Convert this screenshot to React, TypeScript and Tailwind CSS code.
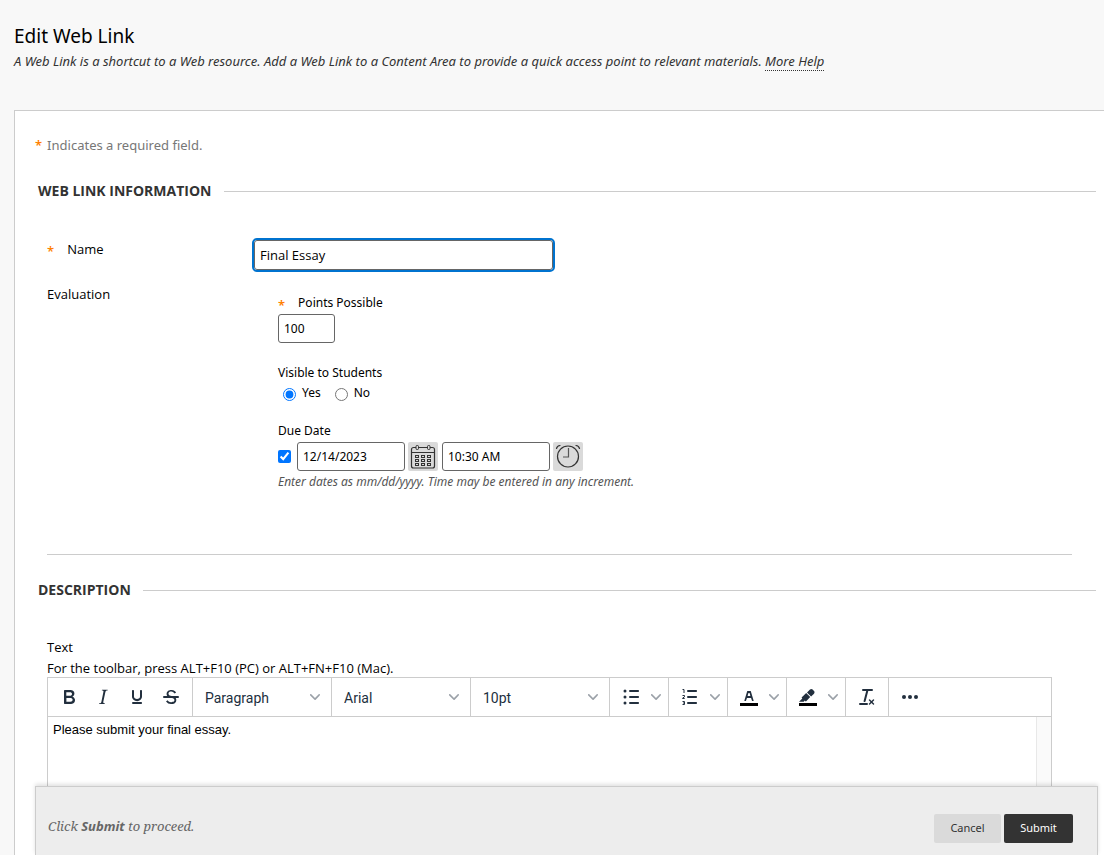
import React, { useState } from 'react';

const FONT_SIZES = ['8pt', '10pt', '12pt', '14pt', '18pt', '24pt'];

/** Orange marker in front of required fields. */
const Required: React.FC = () => <span className="text-[13px] leading-5 font-semibold text-[#ff8000]">*</span>;

const SectionTitle: React.FC<{ children: React.ReactNode }> = ({ children }) => (
    <div className="flex items-center gap-3 pl-[23px] pr-2">
        <h2 className="text-[14px] leading-5 font-bold text-[#333]">{children}</h2>
        <div className="h-px flex-1 bg-[#ccc]" />
    </div>
);

const Chevron: React.FC<{ className?: string }> = ({ className = '' }) => (
    <svg width="10" height="10" viewBox="0 0 10 10" fill="#222f3e" fillOpacity="0.45" className={className}>
        <path d="M8.7 2.2c.3-.3.8-.3 1 0 .4.4.4.9 0 1.2L5.7 7.8c-.3.3-.9.3-1.2 0L.2 3.4a.8.8 0 010-1.2c.3-.3.8-.3 1.1 0L5 6l3.7-3.8z" />
    </svg>
);

const Icon: React.FC<{ children: React.ReactNode }> = ({ children }) => (
    <svg width="24" height="24" viewBox="0 0 24 24" fill="#222f3e">{children}</svg>
);

const ToolButton: React.FC<{ label: string; children: React.ReactNode }> = ({ label, children }) => (
    <button type="button" aria-label={label} className="flex h-[34px] w-[34px] items-center justify-center">
        <Icon>{children}</Icon>
    </button>
);

const MenuArrow: React.FC<{ label: string }> = ({ label }) => (
    <button type="button" aria-label={label} className="flex h-[34px] w-4 items-center justify-center">
        <Chevron />
    </button>
);

const ToolGroup: React.FC<{ children: React.ReactNode; last?: boolean }> = ({ children, last }) => (
    <div className={`flex items-center px-1 ${last ? '' : 'border-r border-[#ccc]'}`}>{children}</div>
);

const ToolSelect: React.FC<{ label: string; initial: string; options: string[] }> = ({ label, initial, options }) => (
    <div className="relative flex w-[139px] items-center border-r border-[#ccc]">
        <select
            aria-label={label}
            defaultValue={initial}
            className="h-[34px] w-full appearance-none bg-transparent pt-[2px] pl-3 pr-6 font-[Roboto,sans-serif] text-sm text-[#222f3e]"
        >
            {options.map(o => <option key={o}>{o}</option>)}
        </select>
        <Chevron className="pointer-events-none absolute right-[11px]" />
    </div>
);

const CalendarIcon: React.FC = () => (
    <svg width="30" height="29" viewBox="0 0 30 29" fill="none" stroke="#333">
        <path d="M8 5.5H5.5a2 2 0 0 0-2 2V24a2 2 0 0 0 2 2h19a2 2 0 0 0 2-2V7.500a2 2 0 0 0-2-2H22M11 5.500h8M3.500 10.500h23" strokeWidth="1.200" />
        <rect x="8" y="3.500" width="2.500" height="4" rx="1" />
        <rect x="19.500" y="3.500" width="2.500" height="4" rx="1" />
        {[13.5, 17.5, 21.5].map(y => [7.5, 13.5, 19.5].map(x => (
            <rect key={`${x}-${y}`} x={x} y={y} width="3" height="2" />
        )))}
    </svg>
);

const ClockIcon: React.FC = () => (
    <svg width="30" height="29" viewBox="0 0 30 29" fill="none" stroke="#333" strokeWidth="1.2" strokeLinecap="round">
        <circle cx="15" cy="14.5" r="10.5" />
        <path d="M15.500 6v9H10" stroke="#555" strokeLinecap="butt" />
        <path d="M3.500 6.500C4 4.500 5 3.700 7 3.500M26.500 6.500C26 4.500 25 3.700 23 3.500" />
    </svg>
);

const inputClass = "h-[29px] rounded-[3px] border border-[#666] bg-white px-[5px] font-['Noto_Sans',sans-serif] text-[12px] text-black";

export default function App() {
    const [name, setName] = useState('Final Essay');
    const [dueEnabled, setDueEnabled] = useState(true);

    return (
        <div className="flex min-h-screen flex-col bg-[#f8f8f8] font-['Open_Sans',sans-serif] text-[13px] leading-4 text-black">
            <header className="px-[14px] pt-6 pb-[41px]">
                <h1 className="font-['Noto_Sans',sans-serif] text-[19px] leading-6">Edit Web Link</h1>
                <p className="mt-[5px] font-['Noto_Sans',sans-serif] italic text-[#333]">
                    A Web Link is a shortcut to a Web resource. Add a Web Link to a Content Area to provide a quick
                    access point to relevant materials.{' '}
                    <a href="#help" className="border-b border-dotted border-[#333]">More Help</a>
                </p>
            </header>

            <form
                className="ml-[14px] flex flex-1 flex-col border-t border-l border-[#ccc] bg-white"
                onSubmit={e => e.preventDefault()}
            >
                <p className="mt-6 flex gap-[5px] pl-5 font-['Noto_Sans',sans-serif] leading-5 text-[#777]">
                    <Required /> Indicates a required field.
                </p>

                <div className="mt-[26px]"><SectionTitle>WEB LINK INFORMATION</SectionTitle></div>

                <section className="mr-8 ml-8 border-b border-[#ccc] pt-[39px] pb-16">
                    <div className="flex">
                        <label htmlFor="name" className="flex h-4 w-[207px] gap-[13px] pt-px">
                            <Required /> Name
                        </label>
                        <input
                            id="name"
                            value={name}
                            onChange={e => setName(e.target.value)}
                            className="h-[30px] w-[299px] rounded-[3px] border border-[#666] bg-white px-[5px] outline-2 outline-[#0073cf]"
                        />
                    </div>

                    <div className="mt-4 flex">
                        <div className="w-[231px]">Evaluation</div>
                        <div className="flex flex-col pt-[9px] font-['Noto_Sans',sans-serif] text-[12px]">
                            <label htmlFor="points" className="flex h-4 gap-[13px]"><Required /> Points Possible</label>
                            <input id="points" defaultValue="100" className={`${inputClass} mt-[3px] w-[57px]`} />

                            <fieldset className="mt-[22px]">
                                <legend>Visible to Students</legend>
                                <div className="mt-1 flex gap-[14px] pl-[5px]">
                                    <label className="flex items-end gap-[6px]">
                                        <input type="radio" name="visible" defaultChecked className="h-[13px] w-[13px]" /> Yes
                                    </label>
                                    <label className="flex items-end gap-[6px]">
                                        <input type="radio" name="visible" className="h-[13px] w-[13px]" /> No
                                    </label>
                                </div>
                            </fieldset>

                            <div className="mt-[22px]">Due Date</div>
                            <div className="mt-[3px] flex items-center">
                                <input
                                    type="checkbox"
                                    aria-label="Due date enabled"
                                    checked={dueEnabled}
                                    onChange={e => setDueEnabled(e.target.checked)}
                                    className="h-[13px] w-[13px]"
                                />
                                <input aria-label="Due date" defaultValue="12/14/2023" className={`${inputClass} ml-[6px] w-[108px]`} />
                                <button type="button" aria-label="Choose date" className="ml-[3px] rounded-[2px] bg-[#dadada]">
                                    <CalendarIcon />
                                </button>
                                <input aria-label="Due time" defaultValue="10:30 AM" className={`${inputClass} ml-1 w-[108px]`} />
                                <button type="button" aria-label="Choose time" className="ml-[3px] rounded-[2px] bg-[#dadada]">
                                    <ClockIcon />
                                </button>
                            </div>
                            <p className="mt-[3px] italic text-[#555]">
                                Enter dates as mm/dd/yyyy. Time may be entered in any increment.
                            </p>
                        </div>
                    </div>
                </section>

                <div className="mt-[25px]"><SectionTitle>DESCRIPTION</SectionTitle></div>

                <section className="mr-[52px] ml-8 flex flex-1 flex-col pt-[39px]">
                    <label htmlFor="editor">Text</label>
                    <p className="mt-[5px] mb-px">For the toolbar, press ALT+F10 (PC) or ALT+FN+F10 (Mac).</p>

                    <div className="flex flex-1 flex-col border-x border-t border-[#ccc]">
                        <div className="flex h-[39px] border-b border-[#ccc]">
                            <ToolGroup>
                                <ToolButton label="Bold">
                                    <path d="M7.8 19c-.3 0-.5 0-.6-.2l-.2-.5V5.7c0-.2 0-.4.2-.5l.6-.2h5c1.5 0 2.7.3 3.5 1 .7.6 1.1 1.4 1.1 2.5a3 3 0 01-.6 1.900c-.4.6-1 1-1.6 1.200.4.1.9.3 1.300.6s.8.7 1 1.200c.4.4.5 1 .5 1.600 0 1.300-.4 2.300-1.300 3-.8.7-2.100 1-3.800 1H7.800zm5-8.300c.6 0 1.200-.1 1.600-.5.4-.3.6-.7.6-1.300 0-1.100-.8-1.700-2.300-1.700H9.300v3.500h3.400zm.5 6c.7 0 1.300-.1 1.700-.4.4-.4.6-.9.6-1.500s-.2-1-.7-1.400c-.4-.3-1-.4-2-.4H9.400v3.800h4z" />
                                </ToolButton>
                                <ToolButton label="Italic">
                                    <path d="M16.7 4.7l-.1.9h-.3c-.6 0-1 0-1.400.3-.3.3-.4.6-.5 1.100l-2.100 9.800v.6c0 .5.4.8 1.400.8h.2l-.2.8H8l.2-.8h.2c1.100 0 1.800-.5 2-1.500l2-9.800.1-.5c0-.6-.4-.8-1.400-.8h-.3l.2-.9h5.800z" />
                                </ToolButton>
                                <ToolButton label="Underline">
                                    <path d="M16 5c.6 0 1 .4 1 1v5.500a4 4 0 01-.4 1.800l-1 1.400a5.300 5.300 0 01-5.500 1 5 5 0 01-1.600-1c-.5-.4-.8-.9-1.100-1.400a4 4 0 01-.4-1.800V6c0-.6.4-1 1-1s1 .4 1 1v5.500c0 .3 0 .6.2 1l.6.7a3.300 3.300 0 002.200.8 3.400 3.400 0 002.200-.8c.3-.2.4-.5.6-.8l.2-.9V6c0-.6.4-1 1-1zM8 17h8c.6 0 1 .4 1 1s-.4 1-1 1H8a1 1 0 010-2z" />
                                </ToolButton>
                                <ToolButton label="Strikethrough">
                                    <path d="M15.600 8.500c-.5-.7-1-1.100-1.300-1.300-.6-.4-1.300-.6-2-.6-2.700 0-2.800 1.700-2.800 2.100 0 1.600 1.800 2 3.200 2.300 4.400.9 4.600 2.800 4.600 3.900 0 1.400-.7 4.100-5 4.100A6.200 6.200 0 017 16.400l1.500-1.100c.4.6 1.600 2 3.700 2 1.600 0 2.500-.4 3-1.200.4-.8.3-2-.8-2.600-.7-.4-1.600-.7-2.900-1-1-.2-3.900-.8-3.900-3.600C7.600 6 10.300 5 12.400 5c2.900 0 4.200 1.600 4.700 2.400l-1.500 1.100z" />
                                    <path d="M5 11h14a1 1 0 010 2H5a1 1 0 010-2z" />
                                </ToolButton>
                            </ToolGroup>

                            <ToolSelect label="Block format" initial="Paragraph" options={['Paragraph', 'Heading 1', 'Heading 2']} />
                            <ToolSelect label="Font" initial="Arial" options={['Arial', 'Georgia', 'Verdana']} />
                            <ToolSelect label="Font size" initial="10pt" options={FONT_SIZES} />

                            <ToolGroup>
                                <ToolButton label="Bullet list">
                                    <path d="M11 5h8c.6 0 1 .4 1 1s-.4 1-1 1h-8a1 1 0 010-2zm0 6h8c.6 0 1 .4 1 1s-.4 1-1 1h-8a1 1 0 010-2zm0 6h8c.6 0 1 .4 1 1s-.4 1-1 1h-8a1 1 0 010-2z" />
                                    <circle cx="6" cy="6" r="1.5" />
                                    <circle cx="6" cy="12" r="1.5" />
                                    <circle cx="6" cy="18" r="1.5" />
                                </ToolButton>
                                <MenuArrow label="Bullet list styles" />
                            </ToolGroup>
                            <ToolGroup>
                                <ToolButton label="Numbered list">
                                    <path d="M10 17h8c.6 0 1 .4 1 1s-.4 1-1 1h-8a1 1 0 010-2zm0-6h8c.6 0 1 .4 1 1s-.4 1-1 1h-8a1 1 0 010-2zm0-6h8c.6 0 1 .4 1 1s-.4 1-1 1h-8a1 1 0 110-2z" />
                                    <path d="M4.500 4.500H6V8M4.500 10.500h2v1.300l-2 1.400v.3h2.200M4.500 16.500h2v3h-2M5 18h1.500" fill="none" stroke="#222f3e" />
                                </ToolButton>
                                <MenuArrow label="Numbered list styles" />
                            </ToolGroup>
                            <ToolGroup>
                                <ToolButton label="Text color">
                                    <path d="M3 18h18v3H3z" fill="#000" />
                                    <path d="M8.700 16h-.8a.5.5 0 01-.5-.6l2.700-9c.1-.3.3-.4.5-.4h2.800c.2 0 .4.1.5.4l2.700 9a.5.5 0 01-.5.6h-.8a.5.5 0 01-.4-.4l-.7-2.200c0-.3-.3-.4-.5-.4h-3.400c-.2 0-.4.1-.5.4l-.7 2.200c0 .3-.2.4-.4.4zm2.600-7.600l-.6 2a.5.5 0 00.5.6h1.600a.5.5 0 00.5-.6l-.6-2c0-.3-.3-.4-.5-.4h-.4c-.2 0-.4.1-.5.4z" />
                                </ToolButton>
                                <MenuArrow label="Text colors" />
                            </ToolGroup>
                            <ToolGroup>
                                <ToolButton label="Highlight">
                                    <path d="M3 18h18v3H3z" fill="#000" />
                                    <path d="M7.700 16.700H3l3.300-3.300-.7-.8L10.200 8l4 4.100-4 4.200c-.2.2-.6.2-.8 0l-.6-.7-1.100 1.100zm5-7.500L11 7.400l3-2.900a2 2 0 012.600 0L18 6c.7.7.7 2 0 2.700l-2.900 2.900-1.800-1.800-.5-.6z" />
                                </ToolButton>
                                <MenuArrow label="Highlight colors" />
                            </ToolGroup>
                            <ToolGroup>
                                <ToolButton label="Clear formatting">
                                    <path d="M13.200 6a1 1 0 010 .2l-2.600 10a1 1 0 01-1 .8h-.2a.8.8 0 01-.8-1l2.600-10H8a1 1 0 110-2h9a1 1 0 010 2h-3.800zM5 18h7a1 1 0 010 2H5a1 1 0 010-2zm13 1.500L16.500 18 15 19.500a.7.7 0 01-1-1l1.500-1.500-1.500-1.500a.7.7 0 011-1l1.500 1.500 1.500-1.500a.7.7 0 011 1L17.500 17l1.500 1.500a.7.7 0 01-1 1z" />
                                </ToolButton>
                            </ToolGroup>
                            <ToolGroup last>
                                <ToolButton label="More">
                                    <circle cx="6" cy="12" r="2" />
                                    <circle cx="12" cy="12" r="2" />
                                    <circle cx="18" cy="12" r="2" />
                                </ToolButton>
                            </ToolGroup>
                        </div>

                        <div className="flex flex-1">
                            <textarea
                                id="editor"
                                defaultValue="Please submit your final essay."
                                className="flex-1 resize-none px-[5px] pt-1 font-['Liberation_Sans',Arial,sans-serif] text-[13px] leading-[18px]"
                            />
                            {/* Scrollbar track */}
                            <div className="w-[15px] border-l border-[#e8e8e8] bg-[#fafafa]" />
                        </div>
                    </div>
                </section>

                <footer className="mr-[6px] ml-5 flex h-[69px] items-center justify-between border-x border-t border-[#ccc] bg-[#ededed] pt-[14px] pr-6 pl-3 shadow-[0_-2px_4px_rgba(0,0,0,0.12)]">
                    <p className="pb-1 font-['Noto_Serif','Liberation_Serif',serif] text-[13px] italic text-[#666]">
                        Click <strong className="font-['Open_Sans',sans-serif]">Submit</strong> to proceed.
                    </p>
                    <div className="flex gap-[3px] font-['Noto_Sans',sans-serif] text-[11px]">
                        <button type="button" className="h-[29px] w-[67px] rounded-[2px] bg-[#dadada] text-[#333]">Cancel</button>
                        <button type="submit" className="h-[29px] w-[69px] rounded-[2px] bg-[#333] text-white">Submit</button>
                    </div>
                </footer>
            </form>
        </div>
    );
}
